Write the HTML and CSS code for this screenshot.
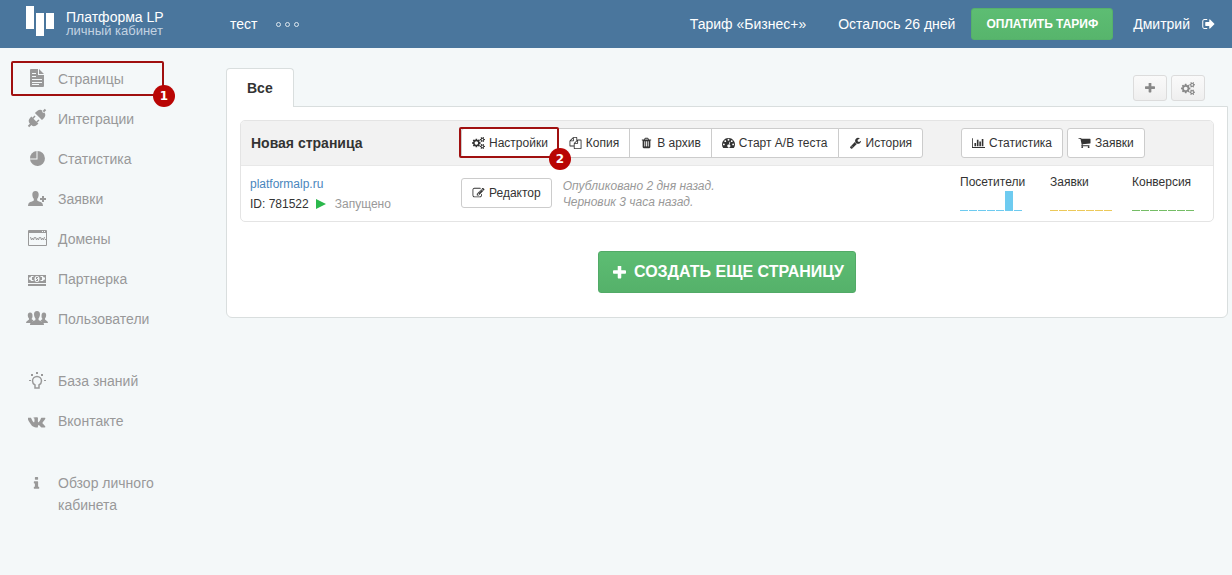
FILE: index.html
```
<!DOCTYPE html>
<html lang="ru">
<head>
<meta charset="utf-8">
<title>Платформа LP — личный кабинет</title>
<link rel="stylesheet" href="styles.css">
</head>
<body>
<svg class="sprite" aria-hidden="true">
  <symbol id="cogs" viewBox="0 0 1920 1792"><path d="M896 896q0-106-75-181t-181-75-181 75-75 181 75 181 181 75 181-75 75-181zm768 512q0-52-38-90t-90-38-90 38-38 90q0 53 37.5 90.5t90.5 37.5 90.5-37.5 37.5-90.5zm0-1024q0-52-38-90t-90-38-90 38-38 90q0 53 37.5 90.5t90.5 37.5 90.5-37.5 37.5-90.5zm-384 421v185q0 10-7 19.5t-16 10.5l-155 24q-11 35-32 76 34 48 90 115 7 11 7 20 0 12-7 19-23 30-82.5 89.5t-78.5 59.5q-11 0-21-7l-115-90q-37 19-77 31-11 108-23 155-7 24-30 24h-186q-11 0-20-7.5t-10-17.5l-23-153q-34-10-75-31l-118 89q-7 7-20 7-11 0-21-8-144-133-144-160 0-9 7-19 10-14 41-53t47-61q-23-44-35-82l-152-24q-10-1-17-9.5t-7-19.5v-185q0-10 7-19.5t16-10.5l155-24q11-35 32-76-34-48-90-115-7-11-7-20 0-12 7-20 22-30 82-89t79-59q11 0 21 7l115 90q34-18 77-32 11-108 23-154 7-24 30-24h186q11 0 20 7.5t10 17.5l23 153q34 10 75 31l118-89q8-7 20-7 11 0 21 8 144 133 144 160 0 8-7 19-12 16-42 54t-45 60q23 48 34 82l152 23q10 2 17 10.5t7 19.5zm640 533v140q0 16-149 31-12 27-30 52 51 113 51 138 0 4-4 7-122 71-124 71-8 0-46-47t-52-68q-20 2-30 2t-30-2q-14 21-52 68t-46 47q-2 0-124-71-4-3-4-7 0-25 51-138-18-25-30-52-149-15-149-31v-140q0-16 149-31 13-29 30-52-51-113-51-138 0-4 4-7 4-2 35-20t59-34 30-16q8 0 46 46.5t52 67.5q20-2 30-2t30 2q51-71 92-112l6-2q4 0 124 70 4 3 4 7 0 25-51 138 17 23 30 52 149 15 149 31zm0-1024v140q0 16-149 31-12 27-30 52 51 113 51 138 0 4-4 7-122 71-124 71-8 0-46-47t-52-68q-20 2-30 2t-30-2q-14 21-52 68t-46 47q-2 0-124-71-4-3-4-7 0-25 51-138-18-25-30-52-149-15-149-31v-140q0-16 149-31 13-29 30-52-51-113-51-138 0-4 4-7 4-2 35-20t59-34 30-16q8 0 46 46.5t52 67.5q20-2 30-2t30 2q51-71 92-112l6-2q4 0 124 70 4 3 4 7 0 25-51 138 17 23 30 52 149 15 149 31z"/></symbol>
  <symbol id="plus" viewBox="192 192 1408 1408"><path d="M1600 736v192q0 40-28 68t-68 28h-416v416q0 40-28 68t-68 28h-192q-40 0-68-28t-28-68v-416h-416q-40 0-68-28t-28-68v-192q0-40 28-68t68-28h416v-416q0-40 28-68t68-28h192q40 0 68 28t28 68v416h416q40 0 68 28t28 68z"/></symbol>
  <symbol id="signout" viewBox="64 128 1600 1536"><path d="M704 1440q0 4 1 20t.5 26.500-3 23.500-10 19.500-20.500 6.500h-320q-119 0-203.500-84.500t-84.500-203.500v-704q0-119 84.500-203.500t203.500-84.500h320q13 0 22.500 9.500t9.500 22.500q0 4 1 20t.5 26.500-3 23.500-10 19.500-20.500 6.500h-320q-66 0-113 47t-47 113v704q0 66 47 113t113 47h312l11.500 1 11.500 3 8 5.500 7 9 2 13.500zm928-544q0 26-19 45l-544 544q-19 19-45 19t-45-19-19-45v-288h-448q-26 0-45-19t-19-45v-384q0-26 19-45t45-19h448v-288q0-26 19-45t45-19 45 19l544 544q19 19 19 45z"/></symbol>
  <symbol id="trash" viewBox="0 0 1792 1792"><path d="M704 1376v-704q0-14-9-23t-23-9h-64q-14 0-23 9t-9 23v704q0 14 9 23t23 9h64q14 0 23-9t9-23zm256 0v-704q0-14-9-23t-23-9h-64q-14 0-23 9t-9 23v704q0 14 9 23t23 9h64q14 0 23-9t9-23zm256 0v-704q0-14-9-23t-23-9h-64q-14 0-23 9t-9 23v704q0 14 9 23t23 9h64q14 0 23-9t9-23zm-544-992h448l-48-117q-7-9-17-11h-317q-10 2-17 11zm928 32v64q0 14-9 23t-23 9h-96v948q0 83-47 143.500t-113 60.500h-832q-66 0-113-58.500t-47-141.500v-952h-96q-14 0-23-9t-9-23v-64q0-14 9-23t23-9h309l70-167q15-37 54-63t79-26h320q40 0 79 26t54 63l70 167h309q14 0 23 9t9 23z"/></symbol>
  <symbol id="wrench" viewBox="0 0 1792 1792"><path d="M448 1472q0-26-19-45t-45-19-45 19-19 45 19 45 45 19 45-19 19-45zm644-420l-682 682q-37 37-90 37-52 0-91-37l-106-108q-38-36-38-90 0-53 38-91l681-681q39 98 114.500 173.500t173.500 114.500zm634-435q0 39-23 106-47 134-164.500 217.500t-258.500 83.500q-185 0-316.500-131.500t-131.500-316.500 131.500-316.500 316.500-131.500q58 0 121.500 16.500t107.500 46.500q16 11 16 28t-16 28l-293 169v224l193 107q5-3 79-48.500t135.500-81 70.500-35.500q15 0 23.500 10t8.500 25z"/></symbol>
  <symbol id="cart" viewBox="0 128 1792 1664"><path d="M704 1536q0 52-38 90t-90 38-90-38-38-90 38-90 90-38 90 38 38 90zm896 0q0 52-38 90t-90 38-90-38-38-90 38-90 90-38 90 38 38 90zm128-1088v512q0 24-16.500 42.500t-40.500 21.500l-1044 122q13 60 13 70 0 16-24 64h920q26 0 45 19t19 45-19 45-45 19h-1024q-26 0-45-19t-19-45q0-11 8-31.500t16-36 21.500-40 15.500-29.500l-177-823h-204q-26 0-45-19t-19-45 19-45 45-19h256q16 0 28.500 6.500t19.500 15.500 13 24.500 8 26 5.500 29.500 4.500 26h1201q26 0 45 19t19 45z"/></symbol>
  <symbol id="chart" viewBox="0 0 2048 1792"><path d="M640 896v512h-256v-512h256zm384-512v1024h-256v-1024h256zm1024 1152v128h-2048v-1536h128v1408h1920zm-640-896v768h-256v-768h256zm384-384v1152h-256v-1152h256z"/></symbol>
  <symbol id="edit" viewBox="0 0 1792 1792"><path d="M888 1184l116-116-152-152-116 116v56h96v96h56zm440-720q-16-16-33 1l-350 350q-17 17-1 33t33-1l350-350q17-17 1-33zm80 594v190q0 119-84.500 203.500t-203.500 84.500h-832q-119 0-203.500-84.500t-84.500-203.500v-832q0-119 84.500-203.500t203.500-84.500h832q63 0 117 25 15 7 18 23 3 17-9 29l-49 49q-14 14-32 8-23-6-45-6h-832q-66 0-113 47t-47 113v832q0 66 47 113t113 47h832q66 0 113-47t47-113v-126q0-13 9-22l64-64q15-15 35-7t20 29zm-96-738l288 288-672 672h-288v-288zm444 132l-92 92-288-288 92-92q28-28 68-28t68 28l152 152q28 28 28 68t-28 68z"/></symbol>
  <symbol id="copy" viewBox="0 0 1792 1792"><path d="M1696 384q40 0 68 28t28 68v1216q0 40-28 68t-68 28h-960q-40 0-68-28t-28-68v-288h-544q-40 0-68-28t-28-68v-672q0-40 20-88t48-76l408-408q28-28 76-48t88-20h416q40 0 68 28t28 68v328q68-40 128-40h416zm-544 213l-299 299h299v-299zm-640-384l-299 299h299v-299zm196 647l316-316v-416h-384v416q0 40-28 68t-68 28h-416v640h512v-256q0-40 20-88t48-76zm956 804v-1152h-384v416q0 40-28 68t-68 28h-416v640h896z"/></symbol>
  <symbol id="gauge" viewBox="0 0 14 13"><path fill-rule="evenodd" d="M7 1a7 7 0 0 0-5.900 10.700q.2.300.6.300h10.600q.4 0 .6-.3A7 7 0 0 0 7 1zM2 7a1 1 0 1 1 0 2 1 1 0 0 1 0-2zm1.500-3.500a1 1 0 1 1 0 2 1 1 0 0 1 0-2zM7 2a1 1 0 1 1 0 2 1 1 0 0 1 0-2zm1.200 3.200.7.200-.8 3a1.600 1.600 0 1 1-.8-.2zm2.300-1.700a1 1 0 1 1 0 2 1 1 0 0 1 0-2zM12 7a1 1 0 1 1 0 2 1 1 0 0 1 0-2z"/></symbol>
  <symbol id="info" viewBox="0 0 1792 1792"><path d="M1216 1344v128q0 26-19 45t-45 19h-512q-26 0-45-19t-19-45v-128q0-26 19-45t45-19h64v-384h-64q-26 0-45-19t-19-45v-128q0-26 19-45t45-19h384q26 0 45 19t19 45v576h64q26 0 45 19t19 45zm-128-1152v192q0 26-19 45t-45 19h-256q-26 0-45-19t-19-45v-192q0-26 19-45t45-19h256q26 0 45 19t19 45z"/></symbol>
  <symbol id="vk" viewBox="0 0 1920 1792"><path d="M1853 520q23 64-150 294-24 32-65 85-78 100-90 131-17 41 14 81 17 21 81 82h1l1 1 1 1 2 2q141 131 191 221 3 5 6.500 12.500t7 26.500-.5 34-25 27.500-59 12.500l-256 4q-24 5-56-5t-52-22l-20-12q-30-21-70-64t-68.500-77.500-61-58-56.500-15.500q-3 1-8 3.500t-17 14.500-21.500 29.500-17 52-6.500 77.500q0 15-3.500 27.500t-7.500 18.500l-4 5q-18 19-53 22h-115q-71 4-146-16.500t-131.500-53-103-66-70.500-57.500l-25-24q-10-10-27.500-30t-71.500-91-106-151-122.500-211-130.500-272q-6-16-6-27t3-16l4-6q15-19 57-19l274-2q12 2 23 6.500t16 8.500l5 3q16 11 24 32 20 50 46 103.500t41 81.500l16 29q29 60 56 104t48.500 68.500 41.500 38.500 34 14 27-5q2-1 5-5t12-22 13.500-47 9.500-81 0-125q-2-40-9-73t-14-46l-6-12q-25-34-85-43-13-2 5-24 16-19 38-30 53-26 239-24 82 1 135 13 20 5 33.500 13.500t20.500 24 10.500 32 3.500 45.500-1 55-2.500 70.500-1.500 82.500q0 11-1 42t-.5 48 3.500 40.500 11.500 39 22.500 24.500q8 2 17 4t26-11 38-34.500 52-67 68-107.500q60-104 107-225 4-10 10-17.500t11-10.500l4-3 5-2.500 13-3 20-.5 288-2q39-5 64 2.500t31 16.500z"/></symbol>
  <symbol id="person" viewBox="0 0 16 16"><path d="M8 0c2.400 0 3.500 1.700 3.400 3.900-.1 2.100-.8 3.500-1.600 4.400v1.900c.6 1 4.900 1.300 5.700 3.400.3.800.5 1.600.5 2.400H0c0-.8.100-1.600.5-2.400.8-2.100 5.100-2.400 5.700-3.400V8.300C5.400 7.400 4.700 6 4.600 3.900 4.500 1.700 5.600 0 8 0z"/></symbol>
</svg>

<header class="topbar">
  <a class="brand" href="#">
    <svg class="logo" viewBox="0 0 28 30"><path d="M0 0h8v23H0zM10 7h8v23h-8zM20 7h8v16h-8z"/></svg>
    <span class="brand-text"><span>Платформа LP</span><small>личный кабинет</small></span>
  </a>
  <a class="project" href="#">тест</a>
  <button class="dots" type="button" aria-label="Ещё"><i></i><i></i><i></i></button>
  <nav class="account">
    <a href="#">Тариф «Бизнес+»</a>
    <span class="left-days">Осталось 26 дней</span>
    <button class="pay" type="button">ОПЛАТИТЬ ТАРИФ</button>
    <a class="user" href="#">Дмитрий <svg class="exit"><use href="#signout"/></svg></a>
  </nav>
</header>

<div class="layout">
  <nav class="sidebar">
    <ul>
      <li class="marked"><a href="#"><svg class="nav-icon" viewBox="0 0 22 20"><path fill-rule="evenodd" d="M5 1h7v6h6v11q0 1-1 1H5q-1 0-1-1V2q0-1 1-1zm8 0 5 5h-5zM6 5h4v1H6zm0 3h4v1H6zm0 3h10v1H6zm0 3h10v1H6zm0 3h7v-1H6z"/></svg>Страницы</a><b class="badge">1</b></li>
      <li><a href="#"><svg class="nav-icon" viewBox="0 0 22 20"><g transform="rotate(-45 11 10)"><path d="M-1 9h4v2h-4zM19 9h4v2h-4zM2 9q0-4 5-4h1v10H7q-5 0-5-4zM20 9q0-4-5-4h-2v10h2q5 0 5-4zM8 6.500h3V8H8zm0 5.500h3v1.500H8z"/></g></svg>Интеграции</a></li>
      <li><a href="#"><svg class="nav-icon" viewBox="0 0 22 20"><path d="M11.500 3a7.500 7.500 0 1 1-7.500 8.500h7.500z"/><path d="M10.500 3v7.500H4A7.200 7.200 0 0 1 10.500 3z"/></svg>Статистика</a></li>
      <li><a href="#"><svg class="nav-icon" viewBox="0 0 22 20"><use href="#person" x="2" y="3" width="15" height="15"/><path d="M16 8h2v2h2v2h-2v2h-2v-2h-2v-2h2z"/></svg>Заявки</a></li>
      <li><a href="#"><svg class="nav-icon" viewBox="0 0 22 20"><path fill-rule="evenodd" d="M3 2h17q1 0 1 1v14q0 1-1 1H3q-1 0-1-1V3q0-1 1-1zm0 3v12h17V5zm13-2v1h1V3zm2 0v1h1V3z"/><path class="line" d="m4.500 9 1 3 1-2 1 2 1-3m1 0 1 3 1-2 1 2 1-3m1 0 1 3 1-2 1 2 1-3"/><path d="M19 11h1v1h-1z"/></svg>Домены</a></li>
      <li><a href="#"><svg class="nav-icon" viewBox="0 0 22 20"><path fill-rule="evenodd" d="M2 7h18v8H2zm3 1q0 1.500-2 1.500v2q2 0 2 1.500h2.500v-1H6V9h1.500V8zm12 0h-2.500v1H16v3h-1.500v1H17q0-1.500 2-1.500v-2q-2 0-2-1.500zm-6 0a2.500 3 0 1 0 0 6 2.500 3 0 0 0 0-6z"/><path d="M10 9h2v1h-1v1h1v2h-2v-1h1v-1h-1zM2 16h18v2H2z"/></svg>Партнерка</a></li>
      <li><a href="#"><svg class="nav-icon" viewBox="0 0 22 20"><path d="M4 4.500c2 0 2.500 1.500 2.500 3.500 0 1.500-.5 2.500-1 3l2 1.500L5 15H0c0-2 2-2.500 3-3.500v-1C1.500 9 1 4.500 4 4.500zM18 4.500c-2 0-2.500 1.500-2.500 3.500 0 1.500.5 2.500 1 3l-2 1.500L17 15h5c0-2-2-2.500-3-3.500v-1c1.500-1.500 2-6-1-6z"/><use href="#person" x="4" y="3" width="14" height="14"/></svg>Пользователи</a></li>
    </ul>
    <ul>
      <li><a href="#"><svg class="nav-icon" viewBox="0 0 22 20"><path class="line bulb" d="M9 18v-3q-2.500-1.500-2.500-4a4.500 4.500 0 0 1 9 0q0 2.500-2.500 4v3z"/><path d="M10 2h2v2h-2zM5 4h2v2H5zm10 0h2v2h-2zM3 10h2v1H3zm15 0h2v1h-2z"/></svg>База знаний</a></li>
      <li><a href="#"><svg class="nav-icon" viewBox="0 0 22 20"><use href="#vk" x="2" y="3" width="18" height="17"/></svg>Вконтакте</a></li>
    </ul>
    <ul>
      <li><a href="#"><svg class="nav-icon" viewBox="0 0 22 20"><use href="#info" x="3" y="4" width="15" height="15"/></svg>Обзор личного кабинета</a></li>
    </ul>
  </nav>

  <main class="content">
    <div class="tabs">
      <a class="tab" href="#">Все</a>
      <div class="tools">
        <button class="tool" type="button" aria-label="Добавить"><svg class="tool-plus"><use href="#plus"/></svg></button>
        <button class="tool" type="button" aria-label="Настройки папок"><svg class="tool-cogs"><use href="#cogs"/></svg></button>
      </div>
    </div>
    <section class="panel">
      <article class="card">
        <div class="card-row card-head">
          <h2>Новая страница</h2>
          <div class="group">
            <button class="btn marked" type="button"><svg class="icon"><use href="#cogs"/></svg>Настройки<b class="badge">2</b></button>
            <button class="btn" type="button"><svg class="icon"><use href="#copy"/></svg>Копия</button>
            <button class="btn" type="button"><svg class="icon"><use href="#trash"/></svg>В архив</button>
            <button class="btn" type="button"><svg class="icon"><use href="#gauge"/></svg>Старт A/B теста</button>
            <button class="btn" type="button"><svg class="icon"><use href="#wrench"/></svg>История</button>
          </div>
          <div class="links">
            <button class="btn" type="button"><svg class="icon"><use href="#chart"/></svg>Статистика</button>
            <button class="btn" type="button"><svg class="icon"><use href="#cart"/></svg>Заявки</button>
          </div>
        </div>
        <div class="card-row card-body">
          <div class="site">
            <a href="#">platformalp.ru</a>
            <div class="status">ID: 781522 <svg class="play" viewBox="0 0 10 10"><path d="M0 0l10 5-10 5z"/></svg><span>Запущено</span></div>
          </div>
          <div class="draft">
            <button class="btn" type="button"><svg class="icon"><use href="#edit"/></svg>Редактор</button>
            <p>Опубликовано 2 дня назад.<br>Черновик 3 часа назад.</p>
          </div>
          <div class="stats">
            <div class="visits">Посетители<div class="spark"><i></i><i></i><i></i><i></i><i></i><i class="peak"></i><i></i></div></div>
            <div class="orders">Заявки<div class="spark"><i></i><i></i><i></i><i></i><i></i><i></i><i></i></div></div>
            <div class="conv">Конверсия<div class="spark"><i></i><i></i><i></i><i></i><i></i><i></i><i></i></div></div>
          </div>
        </div>
      </article>
      <button class="create" type="button"><svg class="create-plus"><use href="#plus"/></svg>СОЗДАТЬ ЕЩЕ СТРАНИЦУ</button>
    </section>
  </main>
</div>
</body>
</html>
```
FILE: styles.css
```
* { box-sizing: border-box; }
body {
  margin: 0;
  background: #f4f8f9;
  color: #333;
  font: 12px/16px "Liberation Sans", Arial, sans-serif;
}
a { color: inherit; text-decoration: none; }
button { font: inherit; color: inherit; cursor: pointer; }
svg { fill: currentColor; flex: none; }
.sprite { display: none; }

.topbar {
  display: flex;
  align-items: center;
  height: 48px;
  padding: 0 17px 0 26px;
  background: #4a769d;
  color: #fff;
  font-size: 14px;
}
.brand { display: flex; gap: 12px; width: 204px; height: 36px; }
.logo { width: 28px; height: 30px; }
.brand-text { display: flex; flex-direction: column; padding-top: 4px; line-height: 14px; }
.brand-text small { font-size: 13px; color: #c3d3e2; }
.dots { display: flex; gap: 4px; margin-left: 19px; padding: 0; border: 0; background: none; }
.dots i { width: 5px; height: 5px; border: 1px solid #dde7ef; border-radius: 50%; }
.account { display: flex; align-items: center; margin-left: auto; }
.left-days { margin: 0 16px 0 32px; }
.pay {
  height: 32px;
  padding: 0 14px;
  border: 1px solid #55b06b;
  border-radius: 3px;
  background: linear-gradient(#5dbd73, #57b56c);
  font-size: 12px;
  font-weight: 700;
}
.user { display: flex; align-items: center; gap: 12px; margin-left: 20px; }
.exit { width: 13px; height: 12px; }

.layout { display: flex; align-items: flex-start; }
.sidebar { flex: none; width: 226px; padding: 11px 62px 0 11px; color: #999; font-size: 14px; line-height: 22px; }
.sidebar ul { margin: 0 0 22px; padding: 0; list-style: none; }
.sidebar li { position: relative; padding: 9px 0; }
.sidebar a { display: flex; gap: 10px; padding-left: 15px; }
.nav-icon { width: 22px; height: 20px; }
.line { fill: none; stroke: currentColor; stroke-width: 1; }
.bulb { stroke-width: 1.500; }
.marked { position: relative; }
.marked::after { content: ""; position: absolute; inset: 2px 0 3px; border: 2px solid #a01010; border-radius: 2px; pointer-events: none; }
.badge {
  position: absolute;
  z-index: 2;
  right: -11px;
  bottom: -8px;
  width: 22px;
  height: 22px;
  border-radius: 50%;
  background: #b90504;
  color: #fff;
  font: 700 12px/22px "DejaVu Sans", sans-serif;
  text-align: center;
}

.content { flex: 1; min-width: 0; padding: 20px 4px 0 0; }
.tabs { display: flex; }
.tab {
  position: relative;
  z-index: 1;
  height: 39px;
  margin-bottom: -1px;
  padding: 0 20px;
  border: 1px solid #d9dede;
  border-bottom: 0;
  border-radius: 4px 4px 0 0;
  background: #fff;
  font-size: 14px;
  font-weight: 700;
  line-height: 38px;
}
.tools { display: flex; gap: 4px; margin: 7px 23px 0 auto; }
.tool {
  display: flex;
  align-items: center;
  justify-content: center;
  width: 34px;
  height: 26px;
  padding: 0;
  border: 1px solid #dcdcdc;
  border-radius: 3px;
  background: linear-gradient(#fafafa, #efefef);
  color: #888;
}
.tool-plus { width: 10px; height: 10px; }
.tool-cogs { width: 14px; height: 13px; }
.panel {
  padding: 13px 13px 24px;
  border: 1px solid #d9dede;
  border-radius: 0 0 6px 6px;
  background: #fff;
  text-align: center;
}
.card { border: 1px solid #e4e4e4; border-radius: 5px; text-align: left; }
.card-row { display: grid; grid-template-columns: 220px 1fr 253px; }
.card-head { align-items: center; height: 45px; border-bottom: 1px solid #e8e8e8; border-radius: 4px 4px 0 0; background: #f2f2f2; }
.card h2 { margin: 0; padding-left: 10px; font-size: 14px; }
.btn {
  display: flex;
  align-items: center;
  gap: 4px;
  height: 30px;
  padding: 0 10px;
  border: 1px solid #ccc;
  border-radius: 3px;
  background: #fff;
  white-space: nowrap;
}
.icon { width: 13px; height: 12px; }
.group, .links, .draft { display: flex; }
.links { gap: 4px; padding-left: 1px; }
.group .btn { margin-left: -1px; border-radius: 0; }
.group .btn:first-child { margin-left: 0; border-radius: 3px 0 0 3px; }
.group .btn:last-child { border-radius: 0 3px 3px 0; }
.group .marked::after { inset: -2px -1px -1px -3px; }
.group .badge { right: -13px; bottom: -13px; }
.card-body { height: 55px; align-items: start; }
.site { padding: 10px 0 0 9px; }
.site a { color: #4a86bd; }
.status { display: flex; align-items: center; margin-top: 4px; }
.status span { color: #999; }
.play { width: 10px; height: 10px; margin: 0 9px 0 7px; color: #2bb84c; }
.draft { gap: 11px; padding-top: 12px; }
.draft p { margin: 0; color: #999; font-style: italic; }
.stats { display: flex; padding-top: 8px; }
.visits { width: 90px; color: #333; }
.orders { width: 82px; }
.spark { display: flex; gap: 1px; align-items: flex-end; height: 20px; margin-top: 1px; color: #6ecbf0; }
.spark i { width: 8px; height: 1px; background: currentColor; }
.spark .peak { height: 20px; }
.orders .spark { color: #ecc95a; }
.conv .spark { color: #75bd66; }
.create {
  display: inline-flex;
  align-items: center;
  gap: 8px;
  height: 42px;
  margin-top: 29px;
  padding: 0 11px 0 14px;
  border: 1px solid #52aa67;
  border-radius: 3px;
  background: linear-gradient(#5dbd73, #55b16a);
  color: #fff;
  font-size: 16px;
  font-weight: 700;
}
.create-plus { width: 13px; height: 13px; }
```
